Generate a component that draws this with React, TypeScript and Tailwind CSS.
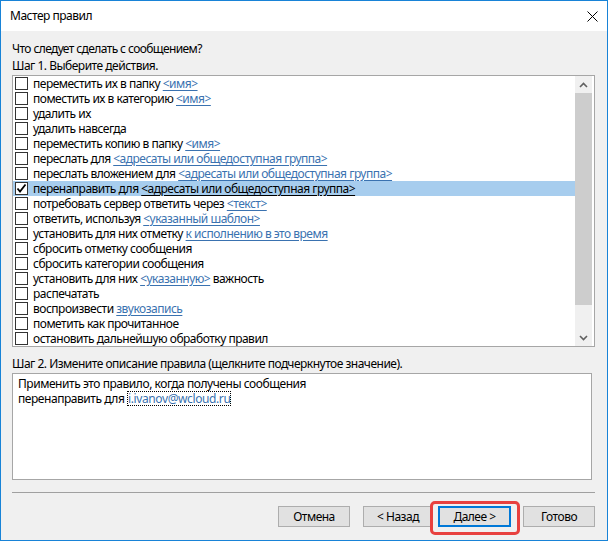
import React from "react";

type Part = { t: string; link?: boolean };
const rows: Part[][] = [
  [{ t: "переместить их в папку " }, { t: "<имя>", link: true }],
  [{ t: "поместить их в категорию " }, { t: "<имя>", link: true }],
  [{ t: "удалить их" }],
  [{ t: "удалить навсегда" }],
  [{ t: "переместить копию в папку " }, { t: "<имя>", link: true }],
  [{ t: "переслать для " }, { t: "<адресаты или общедоступная группа>", link: true }],
  [{ t: "переслать вложением для " }, { t: "<адресаты или общедоступная группа>", link: true }],
  [{ t: "перенаправить для " }, { t: "<адресаты или общедоступная группа>", link: true }],
  [{ t: "потребовать сервер ответить через " }, { t: "<текст>", link: true }],
  [{ t: "ответить, используя " }, { t: "<указанный шаблон>", link: true }],
  [{ t: "установить для них отметку " }, { t: "к исполнению в это время", link: true }],
  [{ t: "сбросить отметку сообщения" }],
  [{ t: "сбросить категории сообщения" }],
  [{ t: "установить для них " }, { t: "<указанную>", link: true }, { t: " важность" }],
  [{ t: "распечатать" }],
  [{ t: "воспроизвести " }, { t: "звукозапись", link: true }],
  [{ t: "пометить как прочитанное" }],
  [{ t: "остановить дальнейшую обработку правил" }],
];

function Check({ checked }: { checked: boolean }) {
  return (
    <span className="w-[13px] h-[13px] border border-[#333333] bg-white flex items-center justify-center shrink-0">
      {checked && (
        <svg width="11" height="11" viewBox="0 0 11 11">
          <path d="M1.5 5.5 L4 8.5 L9.5 1.5" stroke="#000" strokeWidth="1.8" fill="none" />
        </svg>
      )}
    </span>
  );
}

export default function App() {
  return (
    <div
      className="w-[608px] h-[541px] border border-[#1883d7] bg-[#f0f0f0] flex flex-col text-[12px] tracking-[-0.5px] text-black overflow-hidden"
      style={{ fontFamily: '"Noto Sans", "Open Sans", sans-serif' }}
    >
      <div className="h-[30px] bg-white flex items-center justify-between pl-[9px] pr-[9px] shrink-0">
        <span className="text-[12px]">Мастер правил</span>
        <svg width="11" height="11" viewBox="0 0 11 11">
          <path d="M0.5 0.5 L10.5 10.5 M10.5 0.5 L0.5 10.5" stroke="#000" strokeWidth="1" />
        </svg>
      </div>
      <div className="flex flex-col px-[11px] flex-1">
        <div className="h-[17px] leading-[17px] mt-[9px] tracking-[-0.6px]">Что следует сделать с сообщением?</div>
        <div className="h-[17px] leading-[17px]">Шаг 1. Выберите действия.</div>
        <div className="mt-px h-[272px] border border-[#a6a6a6] bg-white flex mr-px">
          <div className="flex-1 flex flex-col">
            {rows.map((r, i) => {
              const sel = i === 7;
              return (
                <div
                  key={i}
                  className={`h-[15px] leading-[15px] flex items-center pl-[2px] gap-[5px] whitespace-nowrap ${sel ? "bg-[#a7cdee]" : ""}`}
                >
                  <Check checked={sel} />
                  <span className="leading-[15px]">
                    {r.map((p, j) =>
                      p.link ? (
                        <span
                          key={j}
                          className={`underline underline-offset-2 tracking-[-0.5px] ${sel ? "text-black" : "text-[#3a72b0]"}`}
                        >
                          {p.t}
                        </span>
                      ) : (
                        <span key={j} className="whitespace-pre">{p.t}</span>
                      )
                    )}
                  </span>
                </div>
              );
            })}
          </div>
          <div className="w-[17px] bg-[#f0f0f0] flex flex-col mr-[2px]">
            <div className="h-[17px] flex items-center justify-center">
              <svg width="9" height="6" viewBox="0 0 9 6">
                <path d="M1 5 L4.5 1.5 L8 5" stroke="#606060" strokeWidth="1.6" fill="none" />
              </svg>
            </div>
            <div className="h-[212px] bg-[#cdcdcd]" />
            <div className="flex-1" />
            <div className="h-[17px] flex items-center justify-center">
              <svg width="9" height="6" viewBox="0 0 9 6">
                <path d="M1 1 L4.5 4.5 L8 1" stroke="#606060" strokeWidth="1.6" fill="none" />
              </svg>
            </div>
          </div>
        </div>
        <div className="h-[16px] leading-[16px] mt-[9px]">
          Шаг 2. Измените описание правила (щелкните подчеркнутое значение).
        </div>
        <div className="mt-px h-[107px] border border-[#a6a6a6] bg-white pt-[2px] pl-[5px] mr-[4px] tracking-[-0.45px]">
          <div className="leading-[15px]">Применить это правило, когда получены сообщения</div>
          <div className="leading-[15px] flex">
            <span className="whitespace-pre">перенаправить для </span>
            <span className="text-[#3a72b0] outline-1 outline-dotted outline-black -outline-offset-1 px-px tracking-[-0.4px]">
              i.ivanov@wcloud.ru
            </span>
          </div>
        </div>
        <div className="mt-[12px] h-px bg-[#a0a0a0] mr-px" />
        <div className="mt-[13px] flex justify-end mr-px">
          <button className="w-[72px] h-[21px] bg-[#e1e1e1] border border-[#adadad] text-[12px]">Отмена</button>
          <button className="ml-[13px] w-[70px] h-[21px] bg-[#e1e1e1] border border-[#adadad] text-[12px]">&lt; Назад</button>
          <div className="relative ml-[5px]">
            <button className="w-[73px] h-[21px] bg-[#e1e1e1] border-2 border-[#0078d7] text-[12px]">Далее &gt;</button>
            <span className="absolute left-[-8px] right-[-9px] top-[-5px] bottom-[-8px] border-[3px] border-[#e8413f] rounded-[5px]" />
          </div>
          <button className="ml-[12px] w-[72px] h-[21px] bg-[#e1e1e1] border border-[#adadad] text-[12px]">Готово</button>
        </div>
      </div>
    </div>
  );
}
